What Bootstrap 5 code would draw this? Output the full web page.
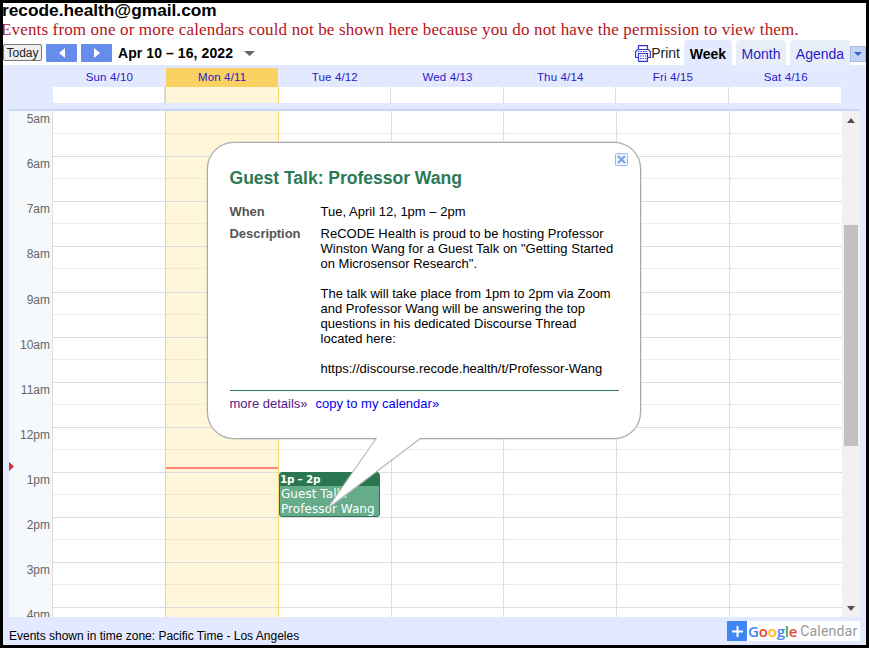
<!DOCTYPE html>
<html lang="en">
<head>
<meta charset="utf-8">
<title>recode.health@gmail.com</title>
<meta name="viewport" content="width=device-width, initial-scale=1">
<link href="https://cdn.jsdelivr.net/npm/bootstrap@5.3.0/dist/css/bootstrap.min.css" rel="stylesheet">
<style>
body{font-family:"Liberation Sans",Arial,sans-serif;color:#000;font-size:12px;line-height:15px}
.frame{width:869px;height:648px;border:3px solid #000}
a{text-decoration:none;color:#2a1ac8}
.cal-title{font-size:17.3px;line-height:15px;font-weight:700;height:17px;margin-left:-1px}
.notice{font:17px/20px "Liberation Serif","Times New Roman",serif;color:#b3141c;height:20px;margin-left:-2px;letter-spacing:.15px}
.toolbar{height:25px}
.today{width:39px;height:17px;border:1px solid #777;border-radius:2px;background:#efefef;font-size:12px;line-height:16px;margin-top:4px;padding:0;color:#222;letter-spacing:-.05px}
.step{width:31px;height:18px;background:#668cec;border:0;border-radius:1px;margin-top:4px}
.range{font-size:14px;line-height:26px;font-weight:700;letter-spacing:.08px}
.view-tab{height:25px;border-radius:4px 4px 0 0;background:#e8eef7;font-size:14px;line-height:28px;text-align:center}
.view-tab.current{background:#e3e9ff;color:#000;font-weight:700}
.more{width:16px;height:16px;margin-top:6px;background:#c3d3f3;border:1px solid #a3bbe8}
.cal{height:580px;background:#e3e9ff;padding:3px 0 0 6px}
.day-name{height:19px;font-size:11.5px;line-height:19px;text-align:center;letter-spacing:.15px}
.day-name.now{background:#fad163}
.names{margin-left:44px;width:789px}
.names>*{flex:1 1 0}
.allday{height:16px;background:#fff;border-right:1px solid #ddd}
.allday.now{background:#fff6d9;border-right:1px solid #fad163;border-left:1px solid #fad163}
.allday-row{width:788px}
.allday:last-child{border-right-color:#fff}
.sep{height:8px;width:851px;border-bottom:2px solid #c7d7f6}
.grid-wrap{height:506px;width:851px;background:#fff}
.hours{width:44px;background:#f5f9fc;border-right:1px solid #ddd;padding-top:1px}
.hour{height:45.14px;color:#666;text-align:right;padding-right:2px;font-size:12px;line-height:14px}
.days{width:789px}
.day-col{flex:1 1 0;border-right:1px solid #ddd;overflow:hidden;padding-top:1px}
.day-col:last-child{border-right:0}
.day-col.now{background:#fff6d9;border-right-color:#fbd371;box-shadow:-1px 0 #fbd371}
.slot{height:45.14px;border-bottom:1px solid #ddd}
.slot::before{content:"";display:block;height:22px;border-bottom:1px dotted #ddd}
.now-line{left:157px;top:356px;width:112px;height:2px;background:#ff8672}
.now-arrow{left:0;top:351px}
.scroll{width:18px;background:#f1f1f1}
.thumb{height:221px;width:14px;background:#c1c1c1;margin:102px auto 0 2px}
.event{left:270px;top:361px;width:101px;height:45px;background:#66ac8a;border:1px solid #2a7650;border-radius:3px;color:#fff;font-family:"DejaVu Sans",Verdana,sans-serif;overflow:hidden}
.event-time{height:13px;background:#2a7650;font-weight:700;font-size:10.5px;line-height:13px;letter-spacing:-.3px}
.event-name{font-size:12px;line-height:15px;padding-left:1px;white-space:nowrap;padding-top:1px;letter-spacing:.05px}
.bubble{left:207px;top:142px;width:434px;height:297px;border:1px solid #aaa;border-radius:27px;background:#fff;padding:26px 22px 0 21.500px;box-shadow:0 0 0 .5px #ccc}
.bubble h1{font-size:17.6px;line-height:18px;font-weight:700;color:#2c7a54;margin:0 0 17px;letter-spacing:-.05px}
.lbl{width:91px;color:#555;font-weight:700;font-size:13px;letter-spacing:-.05px}
.txt{font-size:13px;white-space:nowrap;letter-spacing:.01px}
.links{border-top:1px solid #2c7a54;margin-top:14px;padding-top:5px;font-size:13px;height:30px;width:389px}
.close-x{right:12px;top:10px}
.tail{left:320px;top:430px}
.tz{font-size:12px;line-height:14px;padding-top:12px}
.brand{width:133px;height:20px;background:#fff;margin:4px 6px 0 0}
.plus{width:20px;height:20px;background:#3f86f6}
.goog{font:15px/20px "Open Sans",sans-serif;font-weight:600;padding-left:1px;letter-spacing:-.2px}
.calword{font-family:Roboto,sans-serif;font-size:14px;line-height:20px;color:#999;padding-left:3px;letter-spacing:.2px}
</style>
</head>
<body class="m-0 bg-white overflow-hidden">
<div class="frame position-relative overflow-hidden">
  <div class="cal-title">recode.health@gmail.com</div>
  <div class="notice text-nowrap">Events from one or more calendars could not be shown here because you do not have the permission to view them.</div>
  <div class="toolbar d-flex">
    <button class="today">Today</button>
    <button class="step ms-1 d-flex align-items-center justify-content-center p-0"><svg width="6" height="10"><path d="M6 0L0 5l6 5z" fill="#fff"/></svg></button>
    <button class="step d-flex align-items-center justify-content-center p-0" style="margin-left:4px"><svg width="6" height="10"><path d="M0 0l6 5-6 5z" fill="#fff"/></svg></button>
    <span class="range" style="margin-left:6px">Apr 10 – 16, 2022</span>
    <svg class="mt-2" style="margin-left:11px" width="11" height="12"><path d="M0 3h11L5.500 8z" fill="#666"/></svg>
    <div class="d-flex ms-auto">
      <svg style="margin-top:5px" width="16" height="17" fill="none" stroke="#3438c8"><path d="M3.500 5V.6h9V5M3 12.500H.6V6.500l2-2h10.800l2 2v6H13M3.500 8.500h9v7.800h-9z" stroke-width="1.200"/><path d="M5 11h6.500M5 13.500h6.500M3 6.500h10" stroke-dasharray="1.500 1"/></svg>
      <span style="font-size:14px;line-height:26px;margin-right:4px;color:#222">Print</span>
      <a class="view-tab current" style="width:48px">Week</a>
      <a class="view-tab" style="width:50px;margin-left:4px">Month</a>
      <a class="view-tab" style="width:60px;margin-left:4px">Agenda</a>
      <span class="more d-flex align-items-center justify-content-center"><svg width="8" height="4"><path d="M0 0h8L4 4z" fill="#2d66cf"/></svg></span>
    </div>
  </div>
  <div class="cal">
    <div class="names d-flex">
      <a class="day-name">Sun 4/10</a><a class="day-name now">Mon 4/11</a><a class="day-name">Tue 4/12</a><a class="day-name">Wed 4/13</a><a class="day-name">Thu 4/14</a><a class="day-name">Fri 4/15</a><a class="day-name">Sat 4/16</a>
    </div>
    <div class="names allday-row d-flex">
      <div class="allday"></div><div class="allday now"></div><div class="allday"></div><div class="allday"></div><div class="allday"></div><div class="allday"></div><div class="allday"></div>
    </div>
    <div class="sep"></div>
    <div class="grid-wrap d-flex position-relative overflow-hidden">
      <div class="hours flex-shrink-0">
        <div class="hour">5am</div><div class="hour">6am</div><div class="hour">7am</div><div class="hour">8am</div><div class="hour">9am</div><div class="hour">10am</div><div class="hour">11am</div><div class="hour">12pm</div><div class="hour">1pm</div><div class="hour">2pm</div><div class="hour">3pm</div><div class="hour">4pm</div>
      </div>
      <div class="days d-flex flex-shrink-0" id="days"></div>
      <div class="scroll flex-shrink-0 d-flex flex-column">
        <svg class="mx-auto" style="margin-top:7px" width="8" height="5"><path d="M0 5h8L4 0z" fill="#505050"/></svg>
        <div class="thumb"></div>
        <svg class="mx-auto mt-auto" style="margin-bottom:6px" width="8" height="5"><path d="M0 0h8L4 5z" fill="#505050"/></svg>
      </div>
      <div class="now-line position-absolute"></div>
      <svg class="now-arrow position-absolute" width="5" height="9"><path d="M0 0l5 4.500L0 9z" fill="#cc3333"/></svg>
      <div class="event position-absolute">
        <div class="event-time">1p – 2p</div>
        <div class="event-name">Guest Talk:<br>Professor Wang</div>
      </div>
    </div>
    <div class="d-flex justify-content-between">
      <div class="tz">Events shown in time zone: Pacific Time - Los Angeles</div>
      <div class="brand d-flex">
        <span class="plus d-flex align-items-center justify-content-center flex-shrink-0"><svg width="11" height="11"><path d="M5.500 0v11M0 5.500h11" stroke="#fff" stroke-width="2"/></svg></span>
        <span class="goog"><span style="color:#4285f4">G</span><span style="color:#ea4335">o</span><span style="color:#fbbc05">o</span><span style="color:#4285f4">g</span><span style="color:#34a853">l</span><span style="color:#ea4335">e</span></span>
        <span class="calword">Calendar</span>
      </div>
    </div>
  </div>
</div>
<div class="bubble position-absolute">
  <svg class="close-x position-absolute" width="13" height="13"><rect x=".5" y=".5" width="12" height="12" rx="1" fill="#eef3ff" stroke="#9ab7ef"/><path d="M3 3l7 7M10 3l-7 7" stroke="#7d9fe8" stroke-width="2"/></svg>
  <h1>Guest Talk: Professor Wang</h1>
  <div class="d-flex" style="height:22px"><div class="lbl">When</div><div class="txt">Tue, April 12, 1pm – 2pm</div></div>
  <div class="d-flex"><div class="lbl">Description</div><div class="txt">ReCODE Health is proud to be hosting Professor<br>Winston Wang for a Guest Talk on "Getting Started<br>on Microsensor Research".<br><br>The talk will take place from 1pm to 2pm via Zoom<br>and Professor Wang will be answering the top<br>questions in his dedicated Discourse Thread<br>located here:<br><br>https://discourse.recode.health/t/Professor-Wang</div></div>
  <div class="links"><a style="color:#551a8b">more details»</a><a style="color:#00e;margin-left:8px">copy to my calendar»</a></div>
</div>
<svg class="tail position-absolute" width="105" height="85"><path d="M57 7.500L7 79 101 8.500V7z" fill="#fff"/><path d="M56.500 8L7 79 101 8" fill="none" stroke="#b8b8b8" stroke-width="1.200"/></svg>
<script>
const days = document.getElementById('days');
for (let d = 0; d < 7; d++) {
  const col = document.createElement('div');
  col.className = 'day-col' + (d === 1 ? ' now' : '');
  col.innerHTML = '<div class="slot"></div>'.repeat(12);
  days.append(col);
}
</script>
<script src="https://cdn.jsdelivr.net/npm/bootstrap@5.3.0/dist/js/bootstrap.bundle.min.js"></script>
</body>
</html>
